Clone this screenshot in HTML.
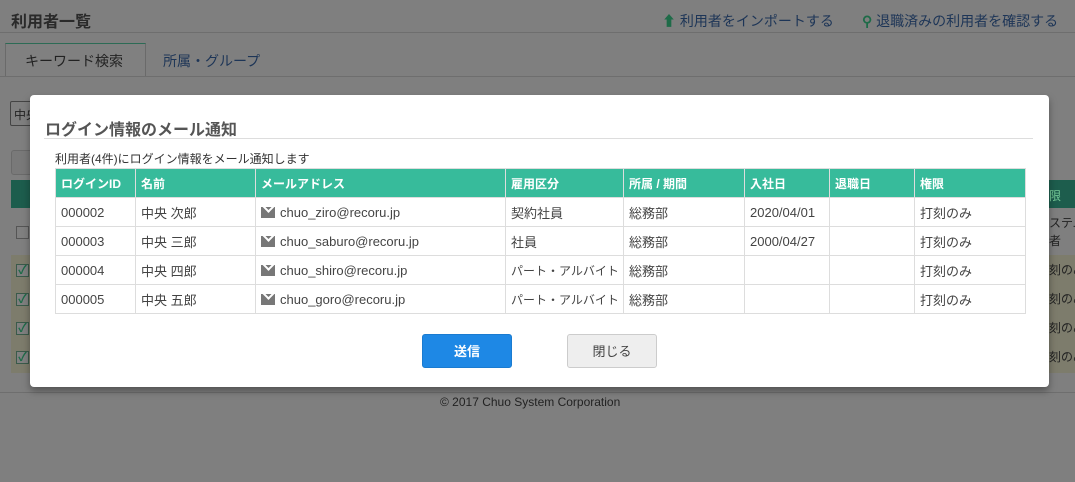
<!DOCTYPE html>
<html><head><meta charset="utf-8"><style>
*{box-sizing:border-box;margin:0;padding:0}
body{width:1075px;height:482px;overflow:hidden;background:#7f7f7f;font-family:"Liberation Sans","Noto Sans CJK JP",sans-serif;position:relative;color:#333}
.abs{position:absolute;white-space:nowrap;overflow:hidden}
.title{left:11px;top:8px;font-size:16px;font-weight:bold;color:#2a2a2a}
.links{top:11px;font-size:14px;color:#1d3557}
.tabtxt{font-size:14px}
.modal{left:30px;top:95px;width:1019px;height:292px;background:#fff;border-radius:4px;box-shadow:0 4px 8px rgba(0,0,0,.35);overflow:visible}
.mt{left:15px;top:21px;font-size:16px;font-weight:bold;color:#555}
.hr{left:14px;top:43px;width:989px;height:1px;background:#ddd}
.sub{left:25px;top:55px;font-size:12px;color:#333}
table{position:absolute;left:25px;top:73px;width:970px;table-layout:fixed;border-collapse:collapse;font-size:13px;color:#444}
td,th{border:1px solid #ddd;height:29px;padding:0 5px;text-align:left;white-space:nowrap;overflow:hidden}
th{background:#37bb9b;color:#fff;font-weight:bold;font-size:12px}
.p{font-size:12px;padding:0 3px 0 5px}
.mail{display:inline-block;width:14px;height:11px;background:#777;vertical-align:-1px;margin-right:5px;position:relative;overflow:hidden}
.mail:after{content:"";position:absolute;left:3px;top:-5px;width:7px;height:7px;border-right:2px solid #fff;border-bottom:2px solid #fff;transform:rotate(45deg)}
.btn{top:239px;width:90px;height:34px;border-radius:3px;font-size:13px;text-align:center;line-height:34px}
.cb{width:13px;height:13px;border:1px solid #3a5a4a;background:#808080;color:#1e6b48;font-size:12px;line-height:11px;text-align:center;font-weight:bold}
</style></head><body>
<div class="abs title">利用者一覧</div>
<div class="abs links" style="left:662px"><span style="color:#1e6b48">⬆</span> 利用者をインポートする</div>
<div class="abs links" style="left:862px"><span style="color:#1e6b48;font-weight:bold">⚲</span> 退職済みの利用者を確認する</div>
<div class="abs" style="left:0;top:32px;width:1075px;height:1px;background:#6e6e6e"></div>
<div class="abs" style="left:5px;top:43px;width:141px;height:34px;border:1px solid #6a6a6a;border-bottom:none;border-top:1px solid #2c6b55;background:#808080"></div>
<div class="abs tabtxt" style="left:25px;top:51px;color:#222">キーワード検索</div>
<div class="abs tabtxt" style="left:163px;top:51px;color:#1d3557">所属・グループ</div>
<div class="abs" style="left:0;top:76px;width:1075px;height:1px;background:#6e6e6e"></div>
<div class="abs" style="left:10px;top:101px;width:30px;height:25px;border:1px solid #444;border-radius:2px;font-size:12px;padding:4px 3px;color:#222">中央</div>
<div class="abs" style="left:11px;top:150px;width:30px;height:25px;border:1px solid #6a6a6a;border-radius:3px;background:#797979"></div>
<div class="abs" style="left:11px;top:180px;width:30px;height:28px;background:#1d5d4d"></div>
<div class="abs" style="left:11px;top:255px;width:30px;height:118px;background:#7d7c6c"></div>
<div class="abs cb" style="left:16px;top:226px;border-color:#555"></div>
<div class="abs cb" style="left:16px;top:264px">✓</div>
<div class="abs cb" style="left:16px;top:293px">✓</div>
<div class="abs cb" style="left:16px;top:322px">✓</div>
<div class="abs cb" style="left:16px;top:351px">✓</div>
<div class="abs" style="left:1049px;top:180px;width:30px;height:28px;background:#1d5d4d;color:#7c9;font-size:12px;padding:7px 0 0 0">限</div>
<div class="abs" style="left:1049px;top:208px;width:30px;height:47px;font-size:12px;color:#222;line-height:18px;padding-top:6px">ステム<br>者</div>
<div class="abs" style="left:1049px;top:255px;width:30px;height:118px;background:#7d7c6c;font-size:12px;color:#222;line-height:29px;padding-top:1px">刻のみ<br>刻のみ<br>刻のみ<br>刻のみ</div>
<div class="abs" style="left:0;top:392px;width:1075px;height:1px;background:#6e6e6e"></div>
<div class="abs" style="left:440px;top:395px;font-size:12px;color:#222">© 2017 Chuo System Corporation</div>
<div class="abs modal">
<div class="abs mt">ログイン情報のメール通知</div>
<div class="abs hr"></div>
<div class="abs sub">利用者(4件)にログイン情報をメール通知します</div>
<table>
<colgroup><col style="width:80px"><col style="width:120px"><col style="width:250px"><col style="width:118px"><col style="width:121px"><col style="width:85px"><col style="width:85px"><col style="width:111px"></colgroup>
<tr><th>ログインID</th><th>名前</th><th>メールアドレス</th><th>雇用区分</th><th>所属 / 期間</th><th>入社日</th><th>退職日</th><th>権限</th></tr>
<tr><td>000002</td><td>中央 次郎</td><td><span class="mail"></span>chuo_ziro@recoru.jp</td><td>契約社員</td><td>総務部</td><td>2020/04/01</td><td></td><td>打刻のみ</td></tr>
<tr><td>000003</td><td>中央 三郎</td><td><span class="mail"></span>chuo_saburo@recoru.jp</td><td>社員</td><td>総務部</td><td>2000/04/27</td><td></td><td>打刻のみ</td></tr>
<tr><td>000004</td><td>中央 四郎</td><td><span class="mail"></span>chuo_shiro@recoru.jp</td><td class="p">パート・アルバイト</td><td>総務部</td><td></td><td></td><td>打刻のみ</td></tr>
<tr><td>000005</td><td>中央 五郎</td><td><span class="mail"></span>chuo_goro@recoru.jp</td><td class="p">パート・アルバイト</td><td>総務部</td><td></td><td></td><td>打刻のみ</td></tr>
</table>
<div class="abs btn" style="left:392px;background:#1e88e5;color:#fff;font-weight:bold;border:1px solid #1a7bd0">送信</div>
<div class="abs btn" style="left:537px;background:#eee;color:#444;border:1px solid #ccc">閉じる</div>
</div>
</body></html>
